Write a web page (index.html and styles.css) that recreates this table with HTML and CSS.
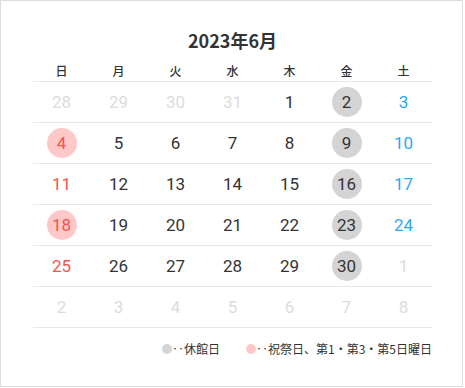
FILE: index.html
```html
<!DOCTYPE html>
<html lang="ja">
<head>
<meta charset="utf-8">
<link rel="stylesheet" href="styles.css">
</head>
<body>
<div class="box">
  <div class="title">2023年6月</div>
  <div class="cal">
    <div class="week head">
      <div class="wd">日</div><div class="wd">月</div><div class="wd">火</div><div class="wd">水</div><div class="wd">木</div><div class="wd">金</div><div class="wd">土</div>
    </div>
    <div class="week">
      <div class="d other"><span>28</span></div><div class="d other"><span>29</span></div><div class="d other"><span>30</span></div><div class="d other"><span>31</span></div><div class="d"><span>1</span></div><div class="d closed"><span>2</span></div><div class="d sat"><span>3</span></div>
    </div>
    <div class="week">
      <div class="d sun hol"><span>4</span></div><div class="d"><span>5</span></div><div class="d"><span>6</span></div><div class="d"><span>7</span></div><div class="d"><span>8</span></div><div class="d closed"><span>9</span></div><div class="d sat"><span>10</span></div>
    </div>
    <div class="week">
      <div class="d sun"><span>11</span></div><div class="d"><span>12</span></div><div class="d"><span>13</span></div><div class="d"><span>14</span></div><div class="d"><span>15</span></div><div class="d closed"><span>16</span></div><div class="d sat"><span>17</span></div>
    </div>
    <div class="week">
      <div class="d sun hol"><span>18</span></div><div class="d"><span>19</span></div><div class="d"><span>20</span></div><div class="d"><span>21</span></div><div class="d"><span>22</span></div><div class="d closed"><span>23</span></div><div class="d sat"><span>24</span></div>
    </div>
    <div class="week">
      <div class="d sun"><span>25</span></div><div class="d"><span>26</span></div><div class="d"><span>27</span></div><div class="d"><span>28</span></div><div class="d"><span>29</span></div><div class="d closed"><span>30</span></div><div class="d other"><span>1</span></div>
    </div>
    <div class="week">
      <div class="d other"><span>2</span></div><div class="d other"><span>3</span></div><div class="d other"><span>4</span></div><div class="d other"><span>5</span></div><div class="d other"><span>6</span></div><div class="d other"><span>7</span></div><div class="d other"><span>8</span></div>
    </div>
  </div>
  <div class="legend">
    <div class="item"><span class="dot grey"></span>‥休館日</div>
    <div class="item"><span class="dot pink"></span>‥祝祭日、第1・第3・第5日曜日</div>
  </div>
</div>
</body>
</html>
```

FILE: styles.css
```css
html, body {
  margin: 0;
  padding: 0;
  background: #ffffff;
}
.box {
  box-sizing: border-box;
  width: 463px;
  height: 387px;
  border: 1px solid #dddddd;
  padding: 25px 30px 0 32px;
  font-family: "Noto Sans CJK JP", "Noto Sans", sans-serif;
  color: #333333;
}
.title {
  text-align: center;
  font-size: 18px;
  font-weight: 700;
  line-height: 28px;
  height: 28px;
  margin-bottom: 7px;
  color: #333333;
}
.cal {
  width: 399px;
}
.week {
  display: grid;
  grid-template-columns: repeat(7, 57px);
  border-bottom: 1px solid #e8e8e8;
}
.head {
  height: 20px;
}
.wd {
  text-align: center;
  font-size: 12px;
  font-weight: 500;
  line-height: 20px;
  color: #333333;
}
.d {
  height: 40px;
  display: flex;
  align-items: center;
  justify-content: center;
  font-family: Roboto, "Noto Sans", sans-serif;
  font-size: 17px;
  color: #333333;
}
.d span {
  width: 30px;
  height: 30px;
  border-radius: 50%;
  display: flex;
  align-items: center;
  justify-content: center;
  line-height: 1;
}
.d.other { color: #dcdcdc; }
.d.sat { color: #2ba9f2; }
.d.sun { color: #f5544d; }
.d.closed span { background: #d4d4d4; }
.d.hol span { background: #ffc8c8; }
.legend {
  display: flex;
  justify-content: flex-end;
  gap: 26px;
  margin-top: 11px;
  font-size: 12px;
  line-height: 20px;
  color: #333333;
}
.item {
  display: flex;
  align-items: center;
}
.dot {
  width: 10px;
  height: 10px;
  border-radius: 50%;
  display: inline-block;
}
.dot.grey { background: #d4d4d4; }
.dot.pink { background: #ffc8c8; }
```
